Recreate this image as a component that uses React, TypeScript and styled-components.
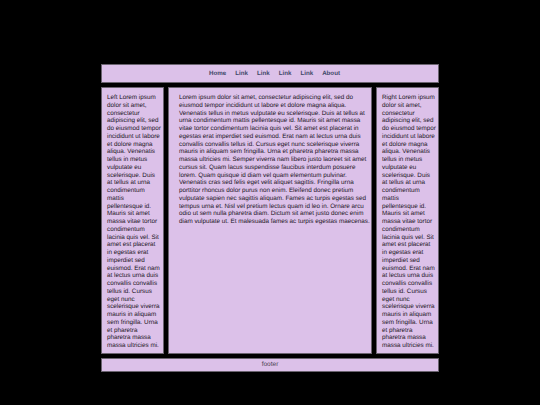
import { FC } from "react"
import styled, { createGlobalStyle } from "styled-components"

const GlobalStyle = createGlobalStyle`
  html, body {
    margin: 0;
    padding: 0;
    background: #000;
  }
  body {
    font-family: "Liberation Sans", Arial, sans-serif;
    text-rendering: geometricPrecision;
  }
`

const BASE =
  "Lorem ipsum dolor sit amet, consectetur adipiscing elit, sed do eiusmod tempor incididunt ut labore et dolore magna aliqua. Venenatis tellus in metus vulputate eu scelerisque. Duis at tellus at urna condimentum mattis pellentesque id. Mauris sit amet massa vitae tortor condimentum lacinia quis vel. Sit amet est placerat in egestas erat imperdiet sed euismod. Erat nam at lectus urna duis convallis convallis tellus id. Cursus eget nunc scelerisque viverra mauris in aliquam sem fringilla. Urna et pharetra pharetra massa massa ultricies mi."

const MAIN =
  BASE +
  " Semper viverra nam libero justo laoreet sit amet cursus sit. Quam lacus suspendisse faucibus interdum posuere lorem. Quam quisque id diam vel quam elementum pulvinar. Venenatis cras sed felis eget velit aliquet sagittis. Fringilla urna porttitor rhoncus dolor purus non enim. Eleifend donec pretium vulputate sapien nec sagittis aliquam. Fames ac turpis egestas sed tempus urna et. Nisl vel pretium lectus quam id leo in. Ornare arcu odio ut sem nulla pharetra diam. Dictum sit amet justo donec enim diam vulputate ut. Et malesuada fames ac turpis egestas maecenas."

const links = ["Home", "Link", "Link", "Link", "Link", "About"]

const App: FC = () => {
  return (
    <>
      <GlobalStyle />
      <Page>
        <Header>
          <Nav>
            {links.map((l, i) => (
              <NavLink key={i} href="#">
                {l}
              </NavLink>
            ))}
          </Nav>
        </Header>
        <Columns>
          <Side>{"Left " + BASE}</Side>
          <Main>{MAIN}</Main>
          <Side>{"Right " + BASE}</Side>
        </Columns>
        <Footer>footer</Footer>
      </Page>
    </>
  )
}
export default App

const Page = styled.div`
  width: 338px;
  margin: 64px auto 0;
  display: flex;
  flex-direction: column;
  gap: 4px;
`

const Panel = styled.div`
  background: #dcc1e9;
  border: 1px solid #6b6470;
  box-sizing: border-box;
`

const Header = styled(Panel)`
  height: 19px;
  display: flex;
  align-items: center;
  justify-content: center;
`

const Nav = styled.nav`
  display: flex;
  gap: 9px;
  padding-left: 9px;
`

const NavLink = styled.a`
  font-size: 6.2px;
  font-weight: bold;
  text-decoration: none;

  &,
  &:link,
  &:visited,
  &:hover,
  &:active,
  &:focus {
    color: #3f4868;
    outline: none;
  }
`

const Columns = styled.div`
  display: grid;
  grid-template-columns: 63px 1fr 63px;
  gap: 4px;
`

const Text = styled(Panel)`
  font-size: 6.3px;
  line-height: 7.75px;
  color: #1a141c;
`

const Side = styled(Text)`
  padding: 6px 2px 3px 5px;
`

const Main = styled(Text)`
  padding: 6px 0 3px 10px;
`

const Footer = styled(Panel)`
  height: 14px;
  display: flex;
  align-items: center;
  justify-content: center;
  font-size: 6.5px;
  color: #4a4250;
`
